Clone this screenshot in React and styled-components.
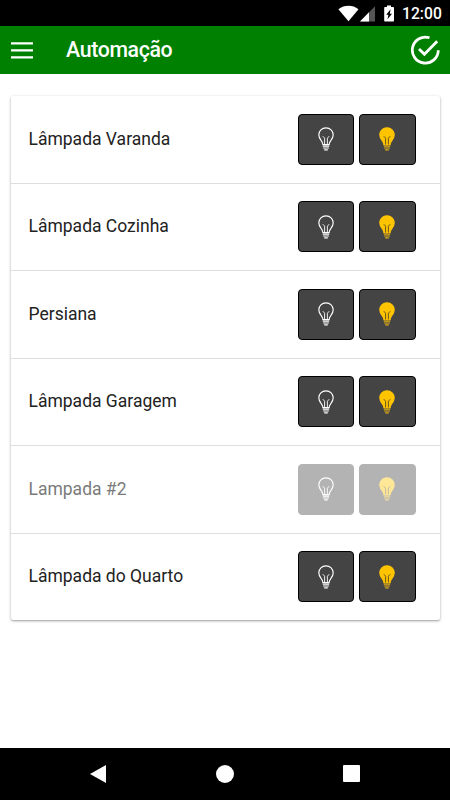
import React from 'react';
import styled, { createGlobalStyle } from 'styled-components';

const GlobalStyle = createGlobalStyle`
  * {
    box-sizing: border-box;
  }

  body {
    margin: 0;
    background: #fff;
    font-family: Roboto, 'Liberation Sans', sans-serif;
  }
`;

const Screen = styled.div`
  width: 450px;
  height: 800px;
  display: flex;
  flex-direction: column;
  overflow: hidden;
  background: #fff;
`;

const StatusBar = styled.div`
  height: 26px;
  flex: none;
  display: flex;
  align-items: center;
  justify-content: flex-end;
  padding-right: 9px;
  background: #000;
  color: #fff;
`;

const StatusIcons = styled.svg`
  display: block;
  margin-right: 8px;
`;

const Clock = styled.span`
  width: 39px;
  font-size: 15.7px;
  font-weight: 500;
  line-height: 26px;
  padding-top: 2px;
  white-space: nowrap;
`;

const Toolbar = styled.header`
  height: 48px;
  flex: none;
  display: flex;
  align-items: center;
  padding: 0 10px 0 11px;
  background: #008000;
  color: #fff;
`;

const IconButton = styled.button`
  display: flex;
  padding: 0;
  border: none;
  background: none;
  color: inherit;
`;

const Title = styled.h1`
  flex: 1;
  margin: 0 0 0 33px;
  font-size: 21.3px;
  font-weight: 500;
  line-height: 24px;
  letter-spacing: -0.35px;
  padding-bottom: 1px;
`;

const Content = styled.main`
  flex: 1;
  padding: 22px 10px 0 11px;
`;

const Card = styled.ul`
  margin: 0;
  padding: 0;
  list-style: none;
  border-radius: 2px;
  background: #fff;
  box-shadow: 0 1px 2px rgba(0, 0, 0, 0.3), 0 1px 4px rgba(0, 0, 0, 0.12);
`;

const Row = styled.li`
  height: 87.5px;
  display: flex;
  align-items: center;
  padding: 0 24.5px 0 17.5px;
  border-bottom: 1px solid #dedede;

  &:last-child {
    height: 86.5px;
    border-bottom: none;
  }
`;

const RowLabel = styled.span`
  flex: 1;
  font-size: 17.5px;
  line-height: 22px;
  color: ${props => (props.$disabled ? '#7a7a7a' : '#222')};
  padding-bottom: 1px;
`;

const Actions = styled.div`
  display: flex;
  gap: 5px;
`;

const LampButton = styled.button`
  width: 56.5px;
  height: 51px;
  display: flex;
  align-items: center;
  justify-content: center;
  padding: 0;
  border: 1px solid ${props => (props.disabled ? '#444' : '#000')};
  border-radius: 4px;
  background: #444;
  opacity: ${props => (props.disabled ? 0.4 : 1)};
`;

const NavBar = styled.nav`
  height: 52.5px;
  flex: none;
  display: flex;
  align-items: center;
  justify-content: space-between;
  padding: 0 90px 0 90px;
  background: #000;
`;

const devices = [
  { name: 'Lâmpada Varanda' },
  { name: 'Lâmpada Cozinha' },
  { name: 'Persiana' },
  { name: 'Lâmpada Garagem' },
  { name: 'Lampada #2', disabled: true },
  { name: 'Lâmpada do Quarto' },
];

function Bulb({ on }) {
  const stroke = on ? '#5a4c1c' : '#fff';
  const base = on ? '#e0ac14' : '#fff';

  return (
    <svg width="16" height="24" viewBox="0 0 16 24" fill="none">
      <path
        d="M4.9 17.6C4.9 13.8 .8 12.7 .8 7.8C.8 3.8 3.9.8 8 .8S15.2 3.8 15.2 7.8C15.2 12.7 11.1 13.8 11.1 17.6Z"
        fill={on ? '#ffc400' : 'none'}
        stroke={on ? '#ffc400' : '#fff'}
        strokeWidth="1.15"
      />
      <path
        d="M4.8 9.2L6.6 11.2V17.5M11.2 9.2L9.4 11.2V17.5"
        stroke={stroke}
        strokeWidth=".9"
      />
      <path d="M4.8 19.1H11.2M5.1 21H10.9M6.2 22.9H9.8" stroke={base} strokeWidth="1.1" />
    </svg>
  );
}

function App() {
  return (
    <>
      <GlobalStyle />
      <Screen>
        <StatusBar>
          <StatusIcons width="56" height="17" viewBox="338 4.5 56 17" fill="#fff">
            <path d="M338.4 8.7C344.2 4.2 352.7 4.2 358.5 8.7L348.5 20.8Z" />
            <path d="M375 5.7V21H360Z" fill="#555" />
            <path d="M369 11.8V21H360Z" />
            <path
              fillRule="evenodd"
              d="M387 5H391V6.6H393.2Q394 6.6 394 7.4V20.2Q394 21 393.2 21H385Q384.2 21 384.2 20.2V7.4Q384.2 6.6 385 6.6H387ZM390.6 8.8L386.2 14.2H388.4L387.5 18.8L392 13.2H389.8Z"
            />
          </StatusIcons>
          <Clock>12:00</Clock>
        </StatusBar>

        <Toolbar>
          <IconButton aria-label="Menu">
            <svg width="22" height="18" viewBox="0 0 22 18" stroke="currentColor" strokeWidth="2.2">
              <path d="M0 2.3H22M0 9.3H22M0 16.3H22" />
            </svg>
          </IconButton>
          <Title>Automação</Title>
          <IconButton aria-label="Confirmar">
            <svg
              width="30"
              height="30"
              viewBox="0 0 30 30"
              fill="none"
              stroke="currentColor"
              strokeWidth="2.8"
            >
              <path d="M19.5 2.8A13 13 0 1 0 28.3 15.3" />
              <path d="M9 13.9L14.4 19.3L27.2 6.3" />
            </svg>
          </IconButton>
        </Toolbar>

        <Content>
          <Card>
            {devices.map(device => (
              <Row key={device.name}>
                <RowLabel $disabled={device.disabled}>{device.name}</RowLabel>
                <Actions>
                  <LampButton disabled={device.disabled} aria-label="Desligar">
                    <Bulb />
                  </LampButton>
                  <LampButton disabled={device.disabled} aria-label="Ligar">
                    <Bulb on />
                  </LampButton>
                </Actions>
              </Row>
            ))}
          </Card>
        </Content>

        <NavBar>
          <svg width="16" height="18" viewBox="0 0 16 18" fill="#fff">
            <path d="M0 9L16 0V18Z" />
          </svg>
          <svg width="18" height="18" viewBox="0 0 18 18" fill="#fff">
            <circle cx="9" cy="9" r="9" />
          </svg>
          <svg width="17" height="17" viewBox="0 0 17 17" fill="#fff">
            <rect width="17" height="17" rx="1" />
          </svg>
        </NavBar>
      </Screen>
    </>
  );
}

export default App;
